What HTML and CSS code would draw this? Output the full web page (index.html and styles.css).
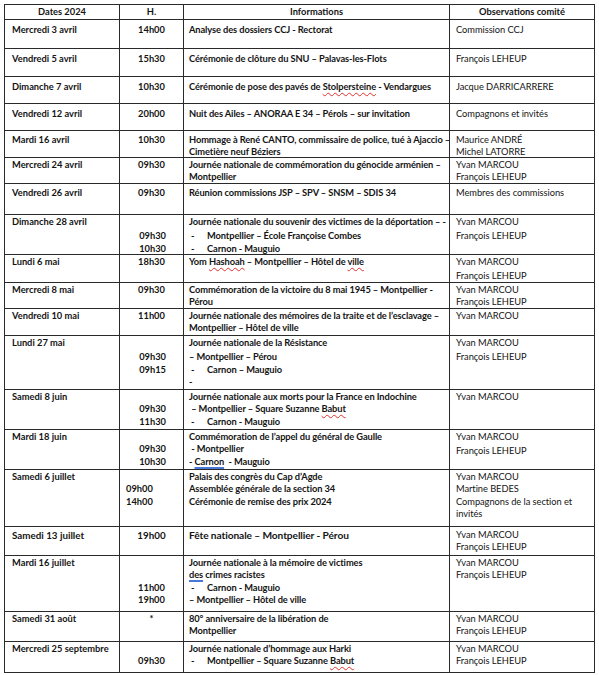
FILE: index.html
```html
<!DOCTYPE html>
<html lang="fr">
<head>
<meta charset="utf-8">
<title>Agenda 2024</title>
<link rel="stylesheet" href="styles.css">
</head>
<body>
<div class="agenda">
  <div class="row head h15">
    <div class="cell">Dates 2024</div><div class="cell">H.</div><div class="cell">Informations</div><div class="cell">Observations comité</div>
  </div>

  <div class="row h29">
    <div class="cell date">Mercredi 3 avril</div>
    <div class="cell hour">14h00</div>
    <div class="cell info">Analyse des dossiers CCJ - Rectorat</div>
    <div class="cell obs">Commission CCJ</div>
  </div>
  <div class="row h28">
    <div class="cell date">Vendredi 5 avril</div>
    <div class="cell hour">15h30</div>
    <div class="cell info">Cérémonie de clôture du SNU – Palavas-les-Flots</div>
    <div class="cell obs">François LEHEUP</div>
  </div>
  <div class="row h27">
    <div class="cell date">Dimanche 7 avril</div>
    <div class="cell hour">10h30</div>
    <div class="cell info">Cérémonie de pose des pavés de <span class="sp">Stolpersteine</span> - Vendargues</div>
    <div class="cell obs">Jacque DARRICARRERE</div>
  </div>
  <div class="row h27">
    <div class="cell date">Vendredi 12 avril</div>
    <div class="cell hour">20h00</div>
    <div class="cell info">Nuit des Ailes – ANORAA E 34 – Pérols – sur invitation</div>
    <div class="cell obs">Compagnons et invités</div>
  </div>
  <div class="row h27 mid">
    <div class="cell date">Mardi 16 avril</div>
    <div class="cell hour">10h30</div>
    <div class="cell info"><div>Hommage à René CANTO, commissaire de police, tué à Ajaccio –</div><div>Cimetière neuf Béziers</div></div>
    <div class="cell obs"><div>Maurice ANDRÉ</div><div>Michel LATORRE</div></div>
  </div>
  <div class="row h26 tight">
    <div class="cell date">Mercredi 24 avril</div>
    <div class="cell hour">09h30</div>
    <div class="cell info"><div>Journée nationale de commémoration du génocide arménien –</div><div>Montpellier</div></div>
    <div class="cell obs"><div>Yvan MARCOU</div><div>François LEHEUP</div></div>
  </div>
  <div class="row h31 mid">
    <div class="cell date">Vendredi 26 avril</div>
    <div class="cell hour">09h30</div>
    <div class="cell info">Réunion commissions JSP – SPV – SNSM – SDIS 34</div>
    <div class="cell obs">Membres des commissions</div>
  </div>
  <div class="row h40 tight">
    <div class="cell date">Dimanche 28 avril</div>
    <div class="cell hour right"><div class="first">&nbsp;</div><div>09h30</div><div>10h30</div></div>
    <div class="cell info"><div class="first">Journée nationale du souvenir des victimes de la déportation – -</div><div><span class="dash">-</span>Montpellier – École Françoise Combes</div><div><span class="dash">-</span>Carnon - Mauguio</div></div>
    <div class="cell obs"><div class="first">Yvan MARCOU</div><div>François LEHEUP</div></div>
  </div>
  <div class="row h28 tight">
    <div class="cell date">Lundi 6 mai</div>
    <div class="cell hour">18h30</div>
    <div class="cell info">Yom <span class="sp">Hashoah</span> – Montpellier – Hôtel de <span class="sp">ville</span></div>
    <div class="cell obs"><div class="first">Yvan MARCOU</div><div>François LEHEUP</div></div>
  </div>
  <div class="row h26 tight">
    <div class="cell date">Mercredi 8 mai</div>
    <div class="cell hour">09h30</div>
    <div class="cell info"><div>Commémoration de la victoire du 8 mai 1945 – Montpellier -</div><div>Pérou</div></div>
    <div class="cell obs"><div>Yvan MARCOU</div><div>François LEHEUP</div></div>
  </div>
  <div class="row h27 tight">
    <div class="cell date">Vendredi 10 mai</div>
    <div class="cell hour">11h00</div>
    <div class="cell info"><div>Journée nationale des mémoires de la traite et de l’esclavage –</div><div>Montpellier – Hôtel de ville</div></div>
    <div class="cell obs">Yvan MARCOU</div>
  </div>
  <div class="row h54 tight">
    <div class="cell date">Lundi 27 mai</div>
    <div class="cell hour right"><div class="first">&nbsp;</div><div>09h30</div><div>09h15</div></div>
    <div class="cell info"><div class="first">Journée nationale de la Résistance</div><div>– Montpellier – Pérou</div><div><span class="dash">-</span>Carnon – Mauguio</div><div>-</div></div>
    <div class="cell obs"><div class="first">Yvan MARCOU</div><div>François LEHEUP</div></div>
  </div>
  <div class="row h40 tight">
    <div class="cell date">Samedi 8 juin</div>
    <div class="cell hour right"><div>&nbsp;</div><div>09h30</div><div>11h30</div></div>
    <div class="cell info"><div>Journée nationale aux morts pour la France en Indochine</div><div>&nbsp;– Montpellier – Square Suzanne <span class="sp">Babut</span></div><div><span class="dash">-</span>Carnon - Mauguio</div></div>
    <div class="cell obs">Yvan MARCOU</div>
  </div>
  <div class="row h40 tight">
    <div class="cell date">Mardi 18 juin</div>
    <div class="cell hour right"><div>&nbsp;</div><div>09h30</div><div>10h30</div></div>
    <div class="cell info"><div>Commémoration de l’appel du général de Gaulle</div><div>&nbsp;- Montpellier</div><div>- <span class="gr">Carnon</span>&nbsp; - Mauguio</div></div>
    <div class="cell obs"><div class="first">Yvan MARCOU</div><div>François LEHEUP</div></div>
  </div>
  <div class="row h57 tight">
    <div class="cell date">Samedi 6 juillet</div>
    <div class="cell hour left"><div>&nbsp;</div><div>09h00</div><div>14h00</div></div>
    <div class="cell info"><div>Palais des congrès du Cap d’Agde</div><div>Assemblée générale de la section 34</div><div>Cérémonie de remise des prix 2024</div></div>
    <div class="cell obs"><div>Yvan MARCOU</div><div>Martine BEDES</div><div>Compagnons de la section et</div><div>invités</div></div>
  </div>
  <div class="row h29 tight big">
    <div class="cell date">Samedi 13 juillet</div>
    <div class="cell hour">19h00</div>
    <div class="cell info">Fête nationale – Montpellier - Pérou</div>
    <div class="cell obs"><div>Yvan MARCOU</div><div>François LEHEUP</div></div>
  </div>
  <div class="row h56 tight">
    <div class="cell date">Mardi 16 juillet</div>
    <div class="cell hour"><div>&nbsp;</div><div>&nbsp;</div><div>11h00</div><div>19h00</div></div>
    <div class="cell info"><div>Journée nationale à la mémoire de victimes</div><div><span class="gr">des</span> crimes racistes</div><div><span class="dash">-</span>Carnon - Mauguio</div><div>– Montpellier – Hôtel de ville</div></div>
    <div class="cell obs"><div>Yvan MARCOU</div><div>François LEHEUP</div></div>
  </div>
  <div class="row h30 tight">
    <div class="cell date">Samedi 31 août</div>
    <div class="cell hour">*</div>
    <div class="cell info"><div>80° anniversaire de la libération de</div><div>Montpellier</div></div>
    <div class="cell obs"><div>Yvan MARCOU</div><div>François LEHEUP</div></div>
  </div>
  <div class="row h31 tight">
    <div class="cell date">Mercredi 25 septembre</div>
    <div class="cell hour"><div>&nbsp;</div><div>09h30</div></div>
    <div class="cell info"><div>Journée nationale d’hommage aux Harki</div><div><span class="dash">-</span>Montpellier – Square Suzanne <span class="sp">Babut</span></div></div>
    <div class="cell obs"><div>Yvan MARCOU</div><div>François LEHEUP</div></div>
  </div>
</div>
</body>
</html>
```

FILE: styles.css
```css
html, body {
  margin: 0;
  padding: 0;
  background: #ffffff;
}

body {
  padding: 4px 0 0 4px;
  font-family: Lato, "Open Sans", "Liberation Sans", sans-serif;
  color: #141414;
}

.agenda {
  width: 591px;
  box-sizing: border-box;
  border-top: 1px solid #2a2a2a;
  border-left: 1px solid #2a2a2a;
  font-size: 9.3px;
  line-height: 12.3px;
}

.row {
  display: grid;
  grid-template-columns: 115px 64px 266px 145px;
  box-sizing: border-box;
}

.cell {
  box-sizing: border-box;
  border-right: 1px solid #2a2a2a;
  border-bottom: 1px solid #2a2a2a;
  padding: 4px 5px 0 5px;
  white-space: nowrap;
  overflow: hidden;
}

.mid .cell { padding-top: 3px; }
.tight .cell { padding-top: 1px; }

.head .cell {
  font-weight: 700;
  text-align: center;
  padding-top: 1px;
  line-height: 12px;
}

.date {
  font-weight: 700;
  padding-left: 7px;
}

.hour {
  font-weight: 700;
  text-align: center;
}

.hour.right {
  text-align: right;
  padding-right: 17px;
}

.hour.left {
  text-align: left;
  padding-left: 6px;
}

.info {
  font-weight: 700;
  letter-spacing: -0.1px;
}

.obs {
  font-weight: 400;
  padding-left: 6px;
  letter-spacing: -0.05px;
}

.first {
  margin-bottom: 2px;
}

.dash {
  display: inline-block;
  width: 18px;
  padding-left: 2px;
  box-sizing: border-box;
}

.sp {
  text-decoration: underline wavy #e0312f;
  text-decoration-thickness: 1px;
  text-underline-offset: 2px;
}

.gr {
  text-decoration: underline solid #4a78d6;
  text-decoration-thickness: 1.5px;
  text-underline-offset: 2px;
}

.big .date,
.big .hour {
  font-size: 9.8px;
}

.big .info {
  font-size: 10.2px;
}

.big .cell { padding-top: 2px; }

.h15 { height: 15px; }
.h26 { height: 26px; }
.h27 { height: 27px; }
.h28 { height: 28px; }
.h29 { height: 29px; }
.h30 { height: 30px; }
.h31 { height: 31px; }
.h40 { height: 40px; }
.h54 { height: 54px; }
.h56 { height: 56px; }
.h57 { height: 57px; }
```
